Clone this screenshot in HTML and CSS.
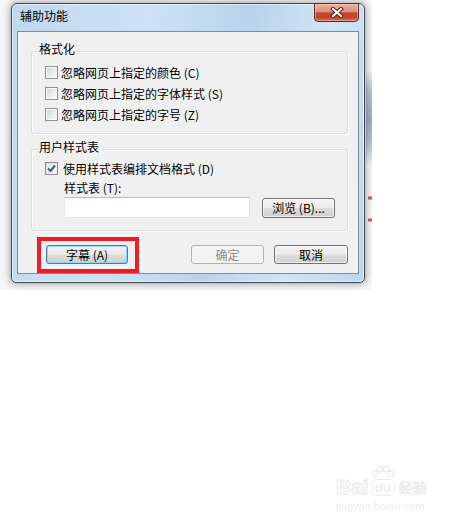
FILE: index.html
```html
<!DOCTYPE html>
<html lang="zh-CN">
<head>
<meta charset="utf-8">
<title>辅助功能</title>
<link rel="stylesheet" href="styles.css">
</head>
<body>
<div class="shot">
  <div class="win">
    <div class="titlebar">
      <span class="title">辅助功能</span>
      <span class="close">
        <svg width="14" height="11" viewBox="0 0 14 11">
          <path d="M3 2 L11 9 M11 2 L3 9" stroke="#4a2520" stroke-width="4" stroke-linecap="square"/>
          <path d="M3 2 L11 9 M11 2 L3 9" stroke="#ffffff" stroke-width="2" stroke-linecap="square"/>
        </svg>
      </span>
    </div>
    <div class="client">
      <div class="group g1">
        <span class="legend">格式化</span>
        <label class="chk"><span class="box"></span><span>忽略网页上指定的颜色 (C)</span></label>
        <label class="chk"><span class="box"></span><span>忽略网页上指定的字体样式 (S)</span></label>
        <label class="chk"><span class="box"></span><span>忽略网页上指定的字号 (Z)</span></label>
      </div>
      <div class="group g2">
        <span class="legend">用户样式表</span>
        <label class="chk chk-on"><span class="box checked"><svg width="9" height="9" viewBox="0 0 9 9"><path d="M1 4.5 L3.5 7 L8 1.5" fill="none" stroke="#3b5a9a" stroke-width="2"/></svg></span><span>使用样式表编排文档格式 (D)</span></label>
        <div class="sheet-label">样式表 (T):</div>
        <div class="sheet-row">
          <span class="input"></span>
          <span class="btn browse">浏览 (B)...</span>
        </div>
      </div>
      <div class="actions">
        <div class="mark"><span class="btn default">字幕 (A)</span></div>
        <span class="btn disabled ok">确定</span>
        <span class="btn cancel">取消</span>
      </div>
    </div>
  </div>
</div>
<div class="watermark">
  <div class="wm-top">
    <span class="wm-bai">Bai</span>
    <span class="wm-du">
      <svg class="paw" width="26" height="14" viewBox="0 0 26 14">
        <g fill="none" stroke="#ececec" stroke-width="1.5">
          <ellipse cx="5" cy="9" rx="2.5" ry="3"/>
          <ellipse cx="10" cy="4" rx="2.5" ry="3"/>
          <ellipse cx="16" cy="4" rx="2.5" ry="3"/>
          <ellipse cx="21" cy="9" rx="2.5" ry="3"/>
        </g>
      </svg>
      <span class="du">du</span>
    </span>
    <span class="wm-jy">经验</span>
  </div>
  <div class="wm-url">jingyan.baidu.com</div>
</div>
</body>
</html>
```

FILE: styles.css
```css
html, body {
  margin: 0;
  padding: 0;
  background: #ffffff;
}

body {
  font-family: "Noto Sans CJK SC", "Liberation Sans", sans-serif;
  font-size: 12px;
  color: #000;
}

.shot {
  width: 372px;
  height: 290px;
  box-sizing: border-box;
  padding: 3px 0 0 11px;
  background:
    linear-gradient(to bottom, transparent 70px, #b3c4d4 90px, #98adc2 120px, #b7c6d4 145px, transparent 165px) right top / 6px 100% no-repeat,
    linear-gradient(to bottom, transparent 196px, #d65a5a 197px, #d65a5a 199px, transparent 200px, transparent 218px, #d65a5a 219px, #d65a5a 221px, transparent 222px) right top / 4px 100% no-repeat,
    #f6f6f6;
}

.win {
  width: 354px;
  height: 280px;
  box-sizing: border-box;
  border: 1px solid #3f4852;
  border-radius: 6px 6px 5px 5px;
  padding: 0 5px 8px 5px;
  background: linear-gradient(100deg, #bfd8f0 0%, #cde2f6 35%, #b8d2ec 60%, #d2e5f7 80%, #bdd6ee 100%);
  box-shadow: 0 0 7px 1px rgba(0, 0, 0, 0.35), inset 0 0 0 1px rgba(255, 255, 255, 0.55);
  display: flex;
  flex-direction: column;
}

.titlebar {
  height: 27px;
  display: flex;
  justify-content: space-between;
  align-items: flex-start;
}

.title {
  margin-top: 5px;
  padding-left: 3px;
  line-height: 14px;
  font-size: 12px;
  color: #000;
}

.close {
  width: 45px;
  height: 19px;
  margin-top: -1px;
  box-sizing: border-box;
  border: 1px solid #5a2d26;
  border-radius: 0 0 4px 4px;
  background: linear-gradient(to bottom, #eab1a4 0%, #dc8f7e 45%, #c6472f 52%, #c4432c 80%, #d8765c 100%);
  box-shadow: inset 0 0 0 1px rgba(255, 220, 210, 0.45);
  display: flex;
  align-items: center;
  justify-content: center;
}

.close svg {
  display: block;
}

.client {
  height: 243px;
  box-sizing: border-box;
  border: 1px solid #7f8b97;
  background: #f0f0f0;
  padding: 19px 10px 0 13px;
}

.group {
  position: relative;
  box-sizing: border-box;
  border: 1px solid #d5dfe5;
  border-radius: 3px;
  box-shadow: inset 1px 1px 0 #ffffff, 1px 1px 0 #ffffff;
  display: flex;
  flex-direction: column;
}

.legend {
  position: absolute;
  top: -10px;
  left: 5px;
  padding: 0 2px;
  background: #f0f0f0;
  line-height: 14px;
}

.g1 {
  height: 83px;
  padding: 14px 0 0 13px;
  gap: 8px;
}

.g2 {
  height: 82px;
  margin-top: 15px;
  padding: 12px 0 0 13px;
}

.chk {
  display: flex;
  align-items: center;
  gap: 3px;
  height: 13px;
  line-height: 13px;
  white-space: nowrap;
}

.chk-on {
  gap: 5px;
}

.box {
  width: 13px;
  height: 13px;
  box-sizing: border-box;
  border: 1px solid #8e8f8f;
  padding: 1px;
  background: linear-gradient(135deg, #cfd2d6 0%, #eeeeee 60%, #f7f7f7 100%) content-box, #fbfbfb;
  flex: none;
  display: flex;
  align-items: center;
  justify-content: center;
}

.box.checked {
  padding: 0;
  background: linear-gradient(135deg, #dfe3ea 0%, #f7f7f7 100%);
}

.box svg {
  display: block;
}

.sheet-label {
  margin: 6px 0 2px 19px;
  line-height: 14px;
}

.sheet-row {
  display: flex;
  align-items: flex-start;
  gap: 12px;
  margin-left: 19px;
}

.input {
  width: 186px;
  height: 21px;
  box-sizing: border-box;
  background: #ffffff;
  border: 1px solid #e2e7ec;
  border-top-color: #b9bcc2;
  border-radius: 2px;
}

.btn {
  box-sizing: border-box;
  height: 19px;
  border: 1px solid #707070;
  border-radius: 3px;
  background: linear-gradient(to bottom, #f3f3f3 0%, #ebebeb 48%, #dddddd 52%, #cfcfcf 100%);
  box-shadow: inset 0 0 0 1px rgba(255, 255, 255, 0.7);
  text-align: center;
  line-height: 17px;
  font-size: 12px;
  white-space: nowrap;
  color: #000;
}

.browse {
  width: 73px;
  height: 20px;
  margin-top: 1px;
  line-height: 18px;
}

.actions {
  margin-top: 6px;
  height: 36px;
  display: flex;
  align-items: flex-start;
}

.mark {
  margin-left: 6px;
  border: 4px solid #ec1c24;
  padding: 4px 7px 5px 5px;
}

.default {
  display: block;
  width: 82px;
  border-color: #3c7fb1;
  box-shadow: inset 0 0 0 1px #9ad4f4;
  background: linear-gradient(to bottom, #f2f2f2 0%, #ebebeb 48%, #dddddd 52%, #cfcfcf 100%);
}

.ok {
  margin-left: auto;
  margin-top: 8px;
  width: 73px;
}

.disabled {
  border-color: #adb2b5;
  background: #f4f4f4;
  color: #8d8d8d;
  box-shadow: none;
}

.cancel {
  margin-left: 10px;
  margin-top: 8px;
  width: 74px;
}

.watermark {
  margin: 176px 0 0 336px;
  width: 100px;
  color: #ececec;
}

.wm-top {
  display: flex;
  align-items: flex-end;
  height: 30px;
}

.wm-bai {
  font-family: "Liberation Sans", sans-serif;
  font-weight: bold;
  font-size: 21px;
  line-height: 18px;
  color: transparent;
  -webkit-text-stroke: 1px #e9e9e9;
}

.wm-du {
  display: flex;
  flex-direction: column;
  align-items: center;
  width: 28px;
}

.paw {
  display: block;
}

.du {
  display: block;
  font-family: "Liberation Sans", sans-serif;
  font-weight: bold;
  font-size: 13px;
  line-height: 15px;
  padding: 0 3px;
  border: 1px solid #eaeaea;
  border-radius: 6px;
  color: #ececec;
}

.wm-jy {
  font-size: 14px;
  line-height: 17px;
  margin-left: 2px;
  color: transparent;
  -webkit-text-stroke: 0.6px #e6e6e6;
}

.wm-url {
  font-family: "Liberation Sans", sans-serif;
  font-size: 11px;
  line-height: 14px;
  margin-top: 3px;
  color: #ececec;
}
```
